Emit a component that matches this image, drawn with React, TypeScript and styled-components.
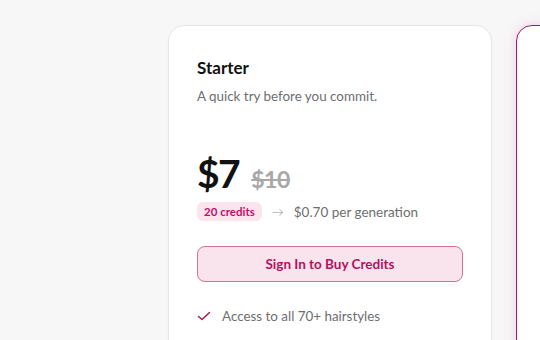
import React from "react";
import styled, { createGlobalStyle } from "styled-components";

const Global = createGlobalStyle`
  html, body { margin: 0; padding: 0; background: #f7f7f7; }
  body { font-family: "Lato", "Liberation Sans", sans-serif; overflow: hidden; }
`;

const Page = styled.div`
  width: 540px;
  height: 340px;
  overflow: hidden;
  display: flex;
  gap: 24px;
  padding: 25px 0 0 168px;
  box-sizing: border-box;
  background: #f7f7f7;
`;

const Card = styled.div<{ $featured?: boolean }>`
  flex: 0 0 auto;
  width: 324px;
  height: 400px;
  box-sizing: border-box;
  background: #ffffff;
  border-radius: 16px;
  border: 1px solid ${(p) => (p.$featured ? "#9c1c73" : "#e6e6e6")};
  box-shadow: ${(p) =>
    p.$featured ? "0 0 12px rgba(230, 90, 170, 0.25)" : "0 1px 3px rgba(0,0,0,0.03)"};
  padding: 30px 28px;
  display: flex;
  flex-direction: column;
`;

const Title = styled.h3`
  margin: 0;
  font-size: 17px;
  font-weight: 700;
  color: #111;
  line-height: 24px;
`;

const Desc = styled.p`
  margin: 7px 0 0;
  font-size: 13.4px;
  color: #6e6e6e;
  line-height: 18px;
`;

const PriceRow = styled.div`
  display: flex;
  align-items: baseline;
  gap: 12px;
  margin-top: 46px;
`;

const Price = styled.span`
  font-size: 39px;
  font-weight: 700;
  color: #111;
  line-height: 44px;
  letter-spacing: -1.5px;
`;

const OldPrice = styled.span`
  font-size: 23px;
  font-weight: 700;
  color: #a8a8a8;
  text-decoration: line-through;
  letter-spacing: -0.5px;
`;

const MetaRow = styled.div`
  display: flex;
  align-items: center;
  gap: 10px;
  margin-top: 7px;
  font-size: 13.5px;
  color: #6e6e6e;
`;

const Badge = styled.span`
  background: #fce4ef;
  color: #bf1067;
  font-weight: 700;
  font-size: 11.5px;
  padding: 3px 7px;
  border-radius: 6px;
  line-height: 13px;
`;

const Arrow = styled.span`
  color: #b5b5b5;
  font-size: 12px;
`;

const BuyButton = styled.button`
  margin-top: 25px;
  height: 36px;
  width: 100%;
  border-radius: 8px;
  border: 1px solid #d6709b;
  background: #f9e3ec;
  color: #b3125e;
  font-family: inherit;
  font-weight: 700;
  font-size: 13.5px;
  cursor: pointer;
`;

const FeatureList = styled.ul`
  list-style: none;
  margin: 26px 0 0;
  padding: 0;
`;

const Feature = styled.li`
  display: flex;
  align-items: center;
  gap: 11px;
  font-size: 13.4px;
  color: #6e6e6e;
`;

const Check = () => (
  <svg width="14" height="14" viewBox="0 0 14 14" fill="none">
    <path d="M1.5 7.5 L5 10.5 L12.5 3.5" stroke="#a3215f" strokeWidth="1.6" strokeLinecap="round" strokeLinejoin="round" />
  </svg>
);

export default function App() {
  return (
    <>
      <Global />
      <Page>
        <Card>
          <Title>Starter</Title>
          <Desc>A quick try before you commit.</Desc>
          <PriceRow>
            <Price>$7</Price>
            <OldPrice>$10</OldPrice>
          </PriceRow>
          <MetaRow>
            <Badge>20 credits</Badge>
            <Arrow>→</Arrow>
            <span>$0.70 per generation</span>
          </MetaRow>
          <BuyButton>Sign In to Buy Credits</BuyButton>
          <FeatureList>
            <Feature>
              <Check />
              Access to all 70+ hairstyles
            </Feature>
          </FeatureList>
        </Card>
        <Card $featured />
      </Page>
    </>
  );
}
